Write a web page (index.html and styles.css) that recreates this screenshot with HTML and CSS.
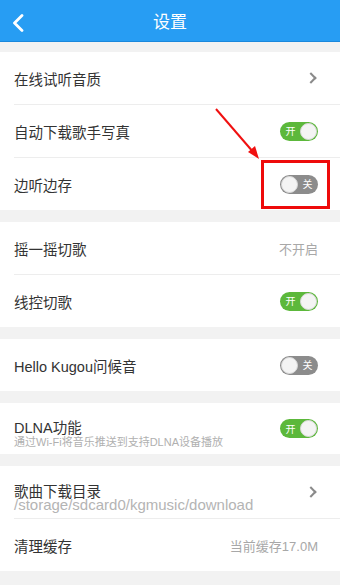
FILE: index.html
```html
<!DOCTYPE html>
<html lang="zh">
<head>
<meta charset="utf-8">
<title>设置</title>
<link rel="stylesheet" href="styles.css">
</head>
<body>
<div class="app">
  <header class="topbar">
    <svg class="back" width="14" height="18" viewBox="0 0 14 18"><path d="M11 1.5 L3.5 9 L11 16.5" fill="none" stroke="#fff" stroke-width="2.8" stroke-linecap="round" stroke-linejoin="round"/></svg>
    <h1 class="title">设置</h1>
  </header>

  <section class="group first">
    <div class="row"><span class="label">在线试听音质</span><span class="chev"></span></div>
    <div class="row"><span class="label">自动下载歌手写真</span><span class="switch on"><span class="txt">开</span><span class="knob"></span></span></div>
    <div class="row"><span class="label">边听边存</span><span class="switch off"><span class="knob"></span><span class="txt">关</span></span></div>
  </section>

  <section class="group">
    <div class="row"><span class="label">摇一摇切歌</span><span class="value">不开启</span></div>
    <div class="row"><span class="label">线控切歌</span><span class="switch on"><span class="txt">开</span><span class="knob"></span></span></div>
  </section>

  <section class="group">
    <div class="row"><span class="label">Hello Kugou问候音</span><span class="switch off"><span class="knob"></span><span class="txt">关</span></span></div>
  </section>

  <section class="group">
    <div class="row tall">
      <div class="stack dlna"><span class="label">DLNA功能</span><span class="sub small">通过Wi-Fi将音乐推送到支持DLNA设备播放</span></div>
      <span class="switch on"><span class="txt">开</span><span class="knob"></span></span>
    </div>
  </section>

  <section class="group">
    <div class="row">
      <div class="stack dir"><span class="label">歌曲下载目录</span><span class="sub path">/storage/sdcard0/kgmusic/download</span></div>
      <span class="chev"></span>
    </div>
    <div class="row"><span class="label">清理缓存</span><span class="value">当前缓存17.0M</span></div>
  </section>

  <div class="highlight"></div>
  <svg class="arrow" width="340" height="585" viewBox="0 0 340 585">
    <line x1="216" y1="109" x2="254" y2="153" stroke="#f01010" stroke-width="2"/>
    <path d="M259 159 L248 152 L255 146 Z" fill="#f01010"/>
  </svg>
</div>
</body>
</html>
```

FILE: styles.css
```css
html, body {
  margin: 0;
  padding: 0;
}
body {
  background: #f2f2f2;
  font-family: "Liberation Sans", "Noto Sans CJK SC", sans-serif;
  color: #333;
}
.app {
  position: relative;
  width: 340px;
  height: 585px;
  overflow: hidden;
  background: #f2f2f2;
}
.topbar {
  height: 41px;
  background: #279df3;
  border-bottom: 1px solid #1b88dc;
  display: flex;
  align-items: center;
  justify-content: center;
  position: relative;
}
.back {
  position: absolute;
  left: 11px;
  top: 14px;
}
.title {
  margin: 0;
  font-size: 17px;
  font-weight: normal;
  color: #fff;
}
.group {
  background: #fff;
  margin-top: 12px;
}
.group.first {
  margin-top: 10px;
}
.row {
  height: 52px;
  margin-left: 14px;
  padding-right: 22px;
  display: flex;
  align-items: center;
  justify-content: space-between;
}
.row + .row {
  border-top: 1px solid #ededed;
}
.row.tall {
  height: 51px;
}
.label {
  font-size: 14.5px;
  color: #333;
}
.value {
  font-size: 13px;
  color: #a8a8a8;
}
.stack {
  display: flex;
  flex-direction: column;
}
.stack.dlna {
  padding-top: 13px;
}
.stack.dlna .label {
  line-height: 15px;
}
.stack.dir {
  padding-top: 12px;
}
.stack.dir .label {
  line-height: 13px;
}
.sub {
  color: #b0b0b0;
}
.sub.small {
  font-size: 11px;
  line-height: 13px;
}
.sub.path {
  font-size: 15px;
  line-height: 12px;
  color: #b4b4b4;
}
.chev {
  width: 6px;
  height: 6px;
  border-right: 2px solid #8a8a8a;
  border-top: 2px solid #8a8a8a;
  transform: rotate(45deg);
  margin-right: 3px;
}
.switch {
  width: 38px;
  height: 19px;
  border-radius: 10px;
  display: flex;
  align-items: center;
  box-sizing: border-box;
  padding: 1px;
  font-family: "Noto Sans CJK SC", sans-serif;
}
.switch.on {
  background: #5cb83b;
  justify-content: space-between;
}
.switch.off {
  background: #8c8c8c;
  justify-content: space-between;
}
.knob {
  width: 17px;
  height: 17px;
  border-radius: 50%;
  background: #f4f4f4;
  box-sizing: border-box;
  border: 1px solid #d8d8d8;
}
.txt {
  font-size: 10px;
  line-height: 10px;
  color: #fff;
  flex: 1;
  text-align: center;
}
.highlight {
  position: absolute;
  left: 261px;
  top: 160px;
  width: 69px;
  height: 49px;
  box-sizing: border-box;
  border: 3px solid #ee0a0a;
}
.arrow {
  position: absolute;
  left: 0;
  top: 0;
  pointer-events: none;
}
```
